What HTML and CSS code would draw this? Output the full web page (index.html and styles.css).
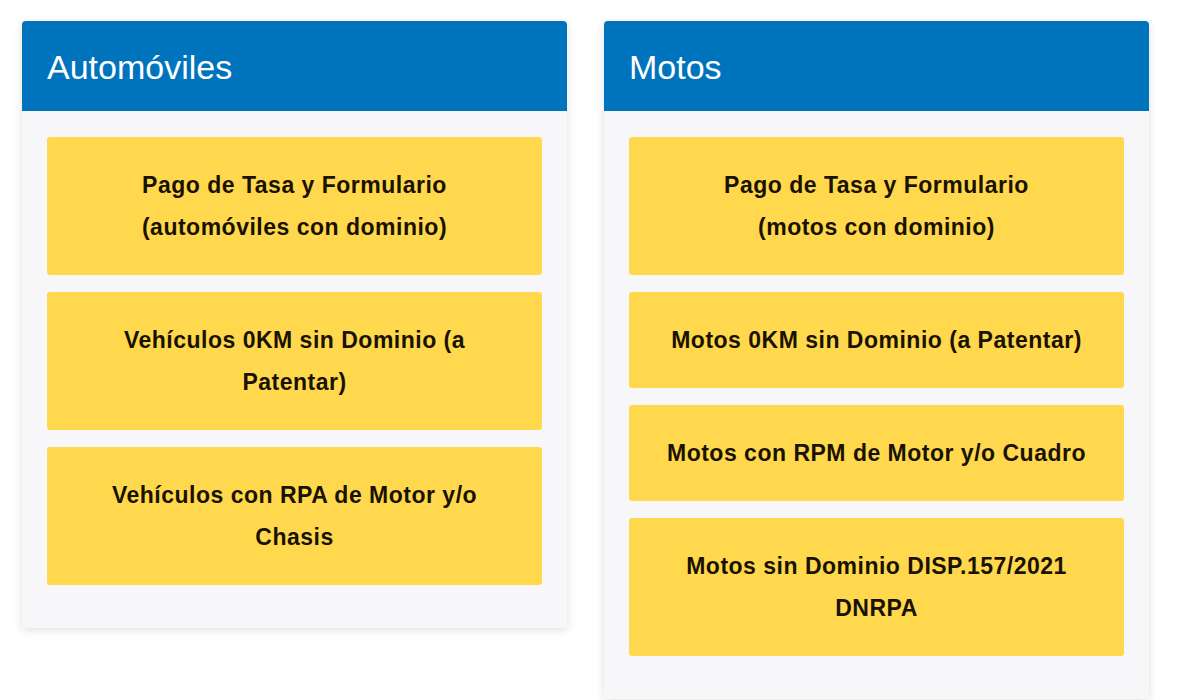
FILE: index.html
```html
<!DOCTYPE html>
<html lang="es">
<head>
    <meta charset="UTF-8">
    <meta name="viewport" content="width=device-width, initial-scale=1.0">
    <title>Trámites</title>
    <link rel="stylesheet" href="styles.css">
</head>
<body>
    <div class="cards">
        <div class="card">
            <div class="card-header">Automóviles</div>
            <div class="card-body">
                <a href="#" class="tramite">Pago de Tasa y Formulario<br>(automóviles con dominio)</a>
                <a href="#" class="tramite">Vehículos 0KM sin Dominio (a<br>Patentar)</a>
                <a href="#" class="tramite">Vehículos con RPA de Motor y/o<br>Chasis</a>
            </div>
        </div>
        <div class="card">
            <div class="card-header">Motos</div>
            <div class="card-body">
                <a href="#" class="tramite">Pago de Tasa y Formulario<br>(motos con dominio)</a>
                <a href="#" class="tramite">Motos 0KM sin Dominio (a Patentar)</a>
                <a href="#" class="tramite">Motos con RPM de Motor y/o Cuadro</a>
                <a href="#" class="tramite">Motos sin Dominio DISP.157/2021<br>DNRPA</a>
            </div>
        </div>
    </div>
</body>
</html>
```

FILE: styles.css
```css
body {
    margin: 0;
    background-color: #fff;
    font-family: 'Liberation Sans', Arial, sans-serif;
    overflow: hidden;
}
.cards {
    display: flex;
    align-items: flex-start;
    gap: 37px;
    padding: 21px 22px;
}
.card {
    width: 545px;
    border-radius: 4px;
    box-shadow: 0 2px 10px rgba(0, 0, 0, 0.13);
}
.card-header {
    height: 90px;
    line-height: 92px;
    padding: 0 25px;
    background-color: #0073bd;
    color: #fff;
    font-size: 34px;
    border-radius: 4px 4px 0 0;
}
.card-body {
    display: flex;
    flex-direction: column;
    gap: 17px;
    padding: 26px 25px 43px;
    background-color: #f7f7fa;
    border-radius: 0 0 4px 4px;
}
.tramite {
    display: block;
    padding: 27px 15px;
    background-color: #ffd84d;
    border-radius: 3px;
    color: #1a1200;
    font-size: 23px;
    font-weight: bold;
    letter-spacing: 0.5px;
    line-height: 42px;
    text-align: center;
    text-decoration: none;
}
```
